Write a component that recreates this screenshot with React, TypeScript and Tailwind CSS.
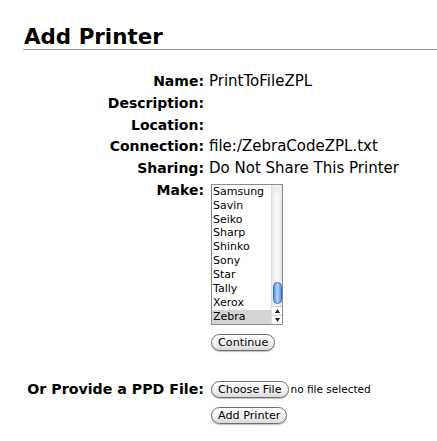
import React from "react";

const makes = ["Samsung", "Savin", "Seiko", "Sharp", "Shinko", "Sony", "Star", "Tally", "Xerox", "Zebra"];

function AquaButton({ children }: { children: React.ReactNode }) {
  return (
    <button
      type="button"
      className="block h-[17px] rounded-full border border-[#6f6f6f] bg-gradient-to-b from-[#ffffff] via-[#f4f4f4] to-[#dadada] px-[6px] text-[11.2px] leading-[15px] text-black shadow-[0_1px_1px_rgba(0,0,0,0.25)]"
      style={{ fontFamily: '"DejaVu Sans", sans-serif' }}
    >
      {children}
    </button>
  );
}

export default function App() {
  return (
    <div className="h-[441px] w-[437px] bg-white text-black" style={{ fontFamily: '"DejaVu Sans", Verdana, sans-serif' }}>
      <div className="pl-[23px] pt-[25px]">
        <h1 className="border-b border-[#999999] pl-[1px] text-[21.4px] font-bold leading-[24px]">Add Printer</h1>
      </div>

      <div className="mt-[21px] grid grid-cols-[204px_1fr] gap-x-[5px] leading-[21.75px]">
        <div className="text-right text-[14px] font-bold">Name:</div>
        <div className="text-[15px]">PrintToFileZPL</div>

        <div className="text-right text-[14px] font-bold">Description:</div>
        <div className="text-[15px]"></div>

        <div className="text-right text-[14px] font-bold">Location:</div>
        <div className="text-[15px]"></div>

        <div className="text-right text-[14px] font-bold">Connection:</div>
        <div className="text-[15px]">file:/ZebraCodeZPL.txt</div>

        <div className="text-right text-[14px] font-bold">Sharing:</div>
        <div className="text-[15px]">Do Not Share This Printer</div>

        <div className="text-right text-[14px] font-bold">Make:</div>
        <div className="pt-[4px] pl-[2px]">
          <div className="flex h-[141px] w-[72px] border border-[#8c8c8c] bg-white">
            <div className="flex flex-1 flex-col">
              {makes.map((m) => (
                <div
                  key={m}
                  className={
                    "h-[13.9px] pl-[1px] text-[11px] leading-[13.9px] " + (m === "Zebra" ? "bg-[#d4d4d4]" : "")
                  }
                >
                  {m}
                </div>
              ))}
            </div>
            <div className="flex w-[11px] flex-col border-l border-[#dcdcdc] bg-gradient-to-r from-[#e8e8e8] via-[#fafafa] to-[#e4e4e4]">
              <div className="flex-1 pt-[2px]">
                <div className="mx-auto h-[6px] w-[9px] rounded-t-full bg-[#eeeeee]" />
              </div>
              <div className="mx-auto mb-[2px] h-[22px] w-[9px] rounded-full border border-[#3b6fc4] bg-gradient-to-r from-[#5b8fe0] via-[#b8d4fa] to-[#5b8fe0]" />
              <div className="flex h-[9px] items-center justify-center border-t border-[#cfcfcf] bg-white">
                <svg width="5" height="4" viewBox="0 0 5 4"><path d="M2.5 0 L5 4 L0 4 Z" fill="#222" /></svg>
              </div>
              <div className="flex h-[9px] items-center justify-center border-t border-[#cfcfcf] bg-white">
                <svg width="5" height="4" viewBox="0 0 5 4"><path d="M0 0 L5 0 L2.5 4 Z" fill="#222" /></svg>
              </div>
            </div>
          </div>
          <div className="mt-[9px] flex">
            <AquaButton>Continue</AquaButton>
          </div>
        </div>

        <div className="col-span-2 h-[28px]" />

        <div className="flex items-center justify-end text-[14.2px] font-bold">Or Provide a PPD File:</div>
        <div className="flex items-center gap-[2px] pl-[2px] text-[10.5px]">
          <AquaButton>Choose File</AquaButton>
          <span>no file selected</span>
        </div>

        <div />
        <div className="flex pl-[2px] pt-[6px]">
          <AquaButton>Add Printer</AquaButton>
        </div>
      </div>
    </div>
  );
}
